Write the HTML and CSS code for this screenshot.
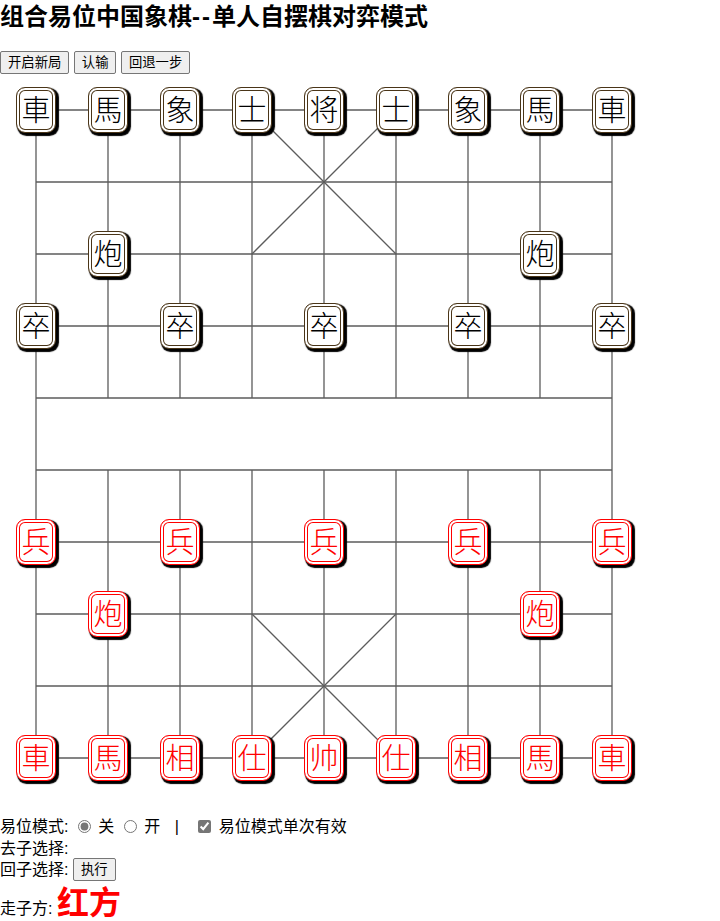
FILE: index.html
```html
<!DOCTYPE html>
<html lang="zh">
<head>
  <meta charset="UTF-8">
  <title>组合易位中国象棋</title>
  <link rel="stylesheet" href="styles.css">
</head>
<body>
  <h2>组合易位中国象棋<span class="dash">--</span>单人自摆棋对弈模式</h2>
  <div class="actions">
    <button>开启新局</button>
    <button>认输</button>
    <button>回退一步</button>
  </div>

  <div class="board">
    <svg class="lines" width="648" height="720" viewBox="0 0 648 720">
      <path d="M36 36H612M36 108H612M36 180H612M36 252H612M36 324H612M36 396H612M36 468H612M36 540H612M36 612H612M36 684H612"/>
      <path d="M36 36V684M612 36V684"/>
      <path d="M108 36V324M180 36V324M252 36V324M324 36V324M396 36V324M468 36V324M540 36V324"/>
      <path d="M108 396V684M180 396V684M252 396V684M324 396V684M396 396V684M468 396V684M540 396V684"/>
      <path d="M252 36L396 180M396 36L252 180M252 540L396 684M396 540L252 684"/>
    </svg>

    <div class="piece black c0 r0">車</div>
    <div class="piece black c1 r0">馬</div>
    <div class="piece black c2 r0">象</div>
    <div class="piece black c3 r0">士</div>
    <div class="piece black c4 r0">将</div>
    <div class="piece black c5 r0">士</div>
    <div class="piece black c6 r0">象</div>
    <div class="piece black c7 r0">馬</div>
    <div class="piece black c8 r0">車</div>
    <div class="piece black c1 r2">炮</div>
    <div class="piece black c7 r2">炮</div>
    <div class="piece black c0 r3">卒</div>
    <div class="piece black c2 r3">卒</div>
    <div class="piece black c4 r3">卒</div>
    <div class="piece black c6 r3">卒</div>
    <div class="piece black c8 r3">卒</div>

    <div class="piece red c0 r6">兵</div>
    <div class="piece red c2 r6">兵</div>
    <div class="piece red c4 r6">兵</div>
    <div class="piece red c6 r6">兵</div>
    <div class="piece red c8 r6">兵</div>
    <div class="piece red c1 r7">炮</div>
    <div class="piece red c7 r7">炮</div>
    <div class="piece red c0 r9">車</div>
    <div class="piece red c1 r9">馬</div>
    <div class="piece red c2 r9">相</div>
    <div class="piece red c3 r9">仕</div>
    <div class="piece red c4 r9">帅</div>
    <div class="piece red c5 r9">仕</div>
    <div class="piece red c6 r9">相</div>
    <div class="piece red c7 r9">馬</div>
    <div class="piece red c8 r9">車</div>
  </div>

  <div class="controls">
    <div class="row">
      易位模式:
      <input type="radio" name="mode" checked> 关
      <input type="radio" name="mode"> 开
      <span class="sep">|</span>
      <input type="checkbox" checked> 易位模式单次有效
    </div>
    <div class="row">去子选择:</div>
    <div class="row exec">回子选择: <button>执行</button></div>
    <div class="row turn">走子方: <span class="side">红方</span></div>
  </div>
</body>
</html>
```

FILE: styles.css
```css
body {
  margin: 0;
  font-family: "Liberation Sans", "Noto Sans CJK SC", sans-serif;
  font-size: 16px;
  color: #000;
  background: #fff;
}
h2 {
  font-size: 24px;
  line-height: 34px;
  margin: 0 0 17px;
  height: 34px;
}
.dash {
  letter-spacing: 2px;
}
button {
  font-family: "Liberation Sans", "Noto Sans CJK SC", sans-serif;
  font-size: 13.33px;
  height: 23px;
  padding: 0 7px;
  line-height: 18px;
  color: #000;
  background: #efefef;
  border: 1px solid #767676;
  border-radius: 2px;
}
.actions {
  display: flex;
  gap: 4.5px;
  height: 23px;
}

/* board: 9 x 10 cells of 72px, lines sit under the pieces */
.board {
  position: relative;
  display: grid;
  grid-template-columns: repeat(9, 72px);
  grid-template-rows: repeat(10, 72px);
  width: 648px;
  height: 720px;
}
.lines {
  position: absolute;
  top: 0;
  left: 0;
}
.lines path {
  fill: none;
  stroke: #5c5c5c;
  stroke-width: 1.3;
}
.piece {
  position: relative;
  place-self: center;
  box-sizing: border-box;
  width: 40px;
  height: 46px;
  padding-bottom: 3px;
  display: flex;
  align-items: center;
  justify-content: center;
  font-family: "Noto Sans CJK SC", sans-serif;
  font-weight: 300;
  font-size: 29px;
  line-height: 1;
  background: #fff;
  border: 1.5px solid;
  border-radius: 9px;
}
.black {
  color: #000;
  border-color: #4a3518;
  box-shadow: inset 0 0 0 2px #fff, inset 0 0 0 3px #4a3518, 2px 2px 1px 0.5px #000;
}
.red {
  color: #f00;
  border-color: #f00;
  box-shadow: inset 0 0 0 2px #fff, inset 0 0 0 3px #f00, 2px 2px 1px 0.5px #000;
}

.c0 { grid-column: 1; }
.c1 { grid-column: 2; }
.c2 { grid-column: 3; }
.c3 { grid-column: 4; }
.c4 { grid-column: 5; }
.c5 { grid-column: 6; }
.c6 { grid-column: 7; }
.c7 { grid-column: 8; }
.c8 { grid-column: 9; }
.r0 { grid-row: 1; }
.r2 { grid-row: 3; }
.r3 { grid-row: 4; }
.r6 { grid-row: 7; }
.r7 { grid-row: 8; }
.r9 { grid-row: 10; }

.controls {
  padding-top: 22px;
}
.row {
  height: 21px;
  line-height: 21px;
  white-space: nowrap;
}
.row:first-child {
  height: 22px;
}
.exec {
  display: flex;
  align-items: center;
  gap: 4.5px;
}
.row input {
  accent-color: #767676;
  margin: 0 3px 0 5px;
  vertical-align: -1px;
}
.sep {
  margin: 0 10px 0 10px;
}
.turn {
  line-height: 37px;
  height: 37px;
  margin-top: 5px;
}
.side {
  font-size: 32px;
  font-weight: bold;
  color: #f00;
}
```
